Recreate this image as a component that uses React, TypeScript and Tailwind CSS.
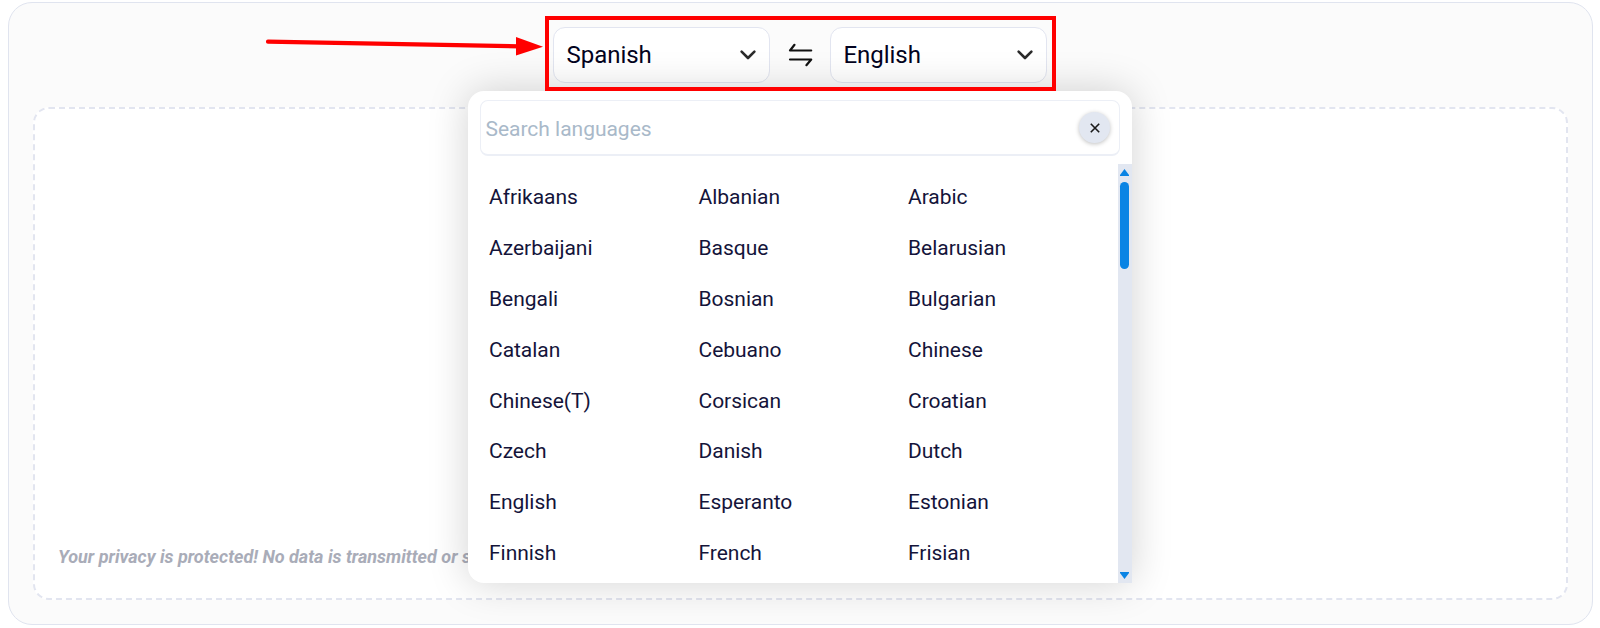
import { useState } from "react";

const languages = [
  "Afrikaans", "Albanian", "Arabic",
  "Azerbaijani", "Basque", "Belarusian",
  "Bengali", "Bosnian", "Bulgarian",
  "Catalan", "Cebuano", "Chinese",
  "Chinese(T)", "Corsican", "Croatian",
  "Czech", "Danish", "Dutch",
  "English", "Esperanto", "Estonian",
  "Finnish", "French", "Frisian",
];

function LanguageSelect({ name }: { name: string }) {
  return (
    <button className="flex h-[56px] w-[217px] items-center justify-between rounded-xl border border-[#e2e5f0] bg-white pr-[12px] pl-[12.5px] text-[24px] leading-none tracking-[-0.04px] text-[#030320]">
      <span>{name}</span>
      <svg width="18" height="12" viewBox="0 0 18 12" fill="none" className="text-[#2b2b2b]">
        <path
          d="M2.6 2.6L9 9L15.4 2.6"
          stroke="currentColor"
          strokeWidth="2.6"
          strokeLinecap="round"
          strokeLinejoin="round"
        />
      </svg>
    </button>
  );
}

function LanguagePopup() {
  const [search, setSearch] = useState("");

  return (
    <div className="absolute top-[91px] left-[468px] flex h-[492px] w-[664px] flex-col rounded-2xl rounded-br-none bg-white shadow-[0_0_40px_rgba(0,0,0,0.18)]">
      <div className="mx-3 mt-[9px] flex h-[56px] shrink-0 items-center justify-between rounded-lg border border-b-2 border-[#eceff6] pr-[9px] pl-[4.5px]">
        <input
          value={search}
          onChange={(e) => setSearch(e.target.value)}
          placeholder="Search languages"
          className="mt-[3px] h-[40px] flex-1 text-[21px] tracking-[-0.02px] outline-none placeholder:text-[#a9b9c9]"
        />
        <button className="flex size-[31px] items-center justify-center rounded-full bg-[#e2e7f1] shadow-[0_1px_4px_rgba(0,0,0,0.25)]">
          <svg width="10" height="10" viewBox="0 0 10 10" className="text-[#1a1a1a]">
            <path d="M0.8 0.8L9.2 9.2M9.2 0.8L0.8 9.2" stroke="currentColor" strokeWidth="1.6" />
          </svg>
        </button>
      </div>
      <div className="mt-2 flex min-h-0 flex-1">
        <ul className="grid flex-1 auto-rows-[50.8px] grid-cols-[209.5px_209.5px_209.5px] pt-[8.5px] pl-[21px]">
          {languages.map((language) => (
            <li
              key={language}
              className="flex items-center text-[21px] leading-none tracking-[-0.03px] text-[#14143a]"
            >
              {language}
            </li>
          ))}
        </ul>
        {/* scrollbar */}
        <div className="flex w-[15px] flex-col items-center bg-[#e2e7f1] pt-[5px] pb-1">
          <svg width="9" height="7" viewBox="0 0 9 7">
            <path d="M4.5 0L9 6V7H0V6Z" fill="#0a84e4" />
          </svg>
          <div className="mt-[6px] h-[87px] w-[9px] rounded-full bg-[#0a84e4]" />
          <svg width="9" height="7" viewBox="0 0 9 7" className="mt-auto">
            <path d="M4.5 7L9 1V0H0V1Z" fill="#0a84e4" />
          </svg>
        </div>
      </div>
    </div>
  );
}

export default function App() {
  return (
    <div className="relative h-[628px] w-[1600px] overflow-hidden bg-white pt-[2px] pl-2 font-['Roboto',sans-serif]">
      <div className="flex h-[623px] w-[1585px] flex-col rounded-3xl border border-[#e0e4ef] bg-[#fbfbfb] px-6 pt-6 pb-6">
        <div className="flex items-center pl-[520px]">
          <LanguageSelect name="Spanish" />
          <svg width="25" height="24" viewBox="0 0 25 24" fill="none" className="mr-[17px] ml-[18px]">
            <path
              d="M23.2 7.5H2L6.5 1.8M2 16.5H23.2L18.4 22.2"
              stroke="#111"
              strokeWidth="2.2"
              strokeLinecap="round"
              strokeLinejoin="round"
            />
          </svg>
          <LanguageSelect name="English" />
        </div>
        <div className="mt-[24px] flex flex-1 items-end rounded-2xl border-2 border-dashed border-[#e2e5f0] bg-white pb-[29px] pl-[23px]">
          {/* cut off where the popup starts */}
          <p className="w-[412px] overflow-hidden text-[18px] leading-[24px] font-bold whitespace-nowrap text-[#a9acb8] italic">
            Your privacy is protected! No data is transmitted or s
          </p>
        </div>
      </div>

      <LanguagePopup />

      {/* highlight around the language pickers */}
      <div className="absolute top-[16px] left-[545px] h-[75px] w-[511px] border-4 border-[#ff0000]" />
      <svg width="280" height="24" viewBox="0 0 280 24" className="absolute top-[35px] left-[264px]">
        <path d="M4 6.7L256 11.3" stroke="#ff0000" strokeWidth="4.2" strokeLinecap="round" />
        <path d="M252 2L279 11.7L252 20.5Z" fill="#ff0000" />
      </svg>
    </div>
  );
}
